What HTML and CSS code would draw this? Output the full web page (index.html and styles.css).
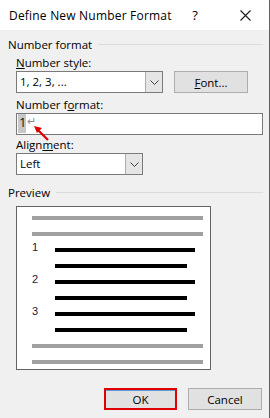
FILE: index.html
```html
<!DOCTYPE html>
<html lang="en">
<head>
    <meta charset="UTF-8">
    <meta name="viewport" content="width=device-width, initial-scale=1.0">
    <link rel="stylesheet" href="styles.css">
    <title>Define New Number Format</title>
</head>
<body>
    <div class="dialog">
        <div class="titlebar">
            <span class="title">Define New Number Format</span>
            <span class="help">?</span>
            <svg class="close" width="11" height="11" viewBox="0 0 11 11">
                <path d="M0.5 0.5 L10.5 10.5 M10.5 0.5 L0.5 10.5" stroke="#1a1a1a" stroke-width="1.1" fill="none"/>
            </svg>
        </div>

        <div class="content">
            <div class="group-label"><span>Number format</span><div class="rule"></div></div>

            <div class="field-label label-style"><u>N</u>umber style:</div>
            <div class="row">
                <div class="combo combo-style">
                    <span class="combo-text">1, 2, 3, ...</span>
                    <span class="combo-btn"><svg width="9" height="5" viewBox="0 0 9 5"><path d="M0.5 0.5 L4.5 4.5 L8.5 0.5" stroke="#404040" fill="none"/></svg></span>
                </div>
                <button class="btn btn-font"><u>F</u>ont...</button>
            </div>

            <div class="field-label label-format">Number f<u>o</u>rmat:</div>
            <div class="textbox">
                <span class="sel">1</span><span class="para">&#8629;</span>
                <svg class="arrow" width="20" height="22" viewBox="0 0 20 22">
                    <path d="M16 19 L6 9" stroke="#e00000" stroke-width="2.2" fill="none"/>
                    <path d="M2 5 L10 7 L5 12 Z" fill="#e00000"/>
                </svg>
            </div>

            <div class="field-label label-align">Align<u>m</u>ent:</div>
            <div class="combo combo-align">
                <span class="combo-text">Left</span>
                <span class="combo-btn"><svg width="9" height="5" viewBox="0 0 9 5"><path d="M0.5 0.5 L4.5 4.5 L8.5 0.5" stroke="#404040" fill="none"/></svg></span>
            </div>

            <div class="group-label label-preview"><span>Preview</span><div class="rule"></div></div>

            <div class="preview">
                <div class="pline gray"></div>
                <div class="pline gray"></div>
                <div class="pline item"><span class="num">1</span><div class="bar long"></div></div>
                <div class="pline item"><span class="num"></span><div class="bar short"></div></div>
                <div class="pline item"><span class="num">2</span><div class="bar long"></div></div>
                <div class="pline item"><span class="num"></span><div class="bar short"></div></div>
                <div class="pline item"><span class="num">3</span><div class="bar long"></div></div>
                <div class="pline item"><span class="num"></span><div class="bar short"></div></div>
                <div class="pline gray"></div>
                <div class="pline gray"></div>
            </div>

            <div class="buttons">
                <button class="btn btn-ok">OK</button>
                <button class="btn btn-cancel">Cancel</button>
            </div>
        </div>
    </div>
</body>
</html>
```

FILE: styles.css
```css
* {
  box-sizing: border-box;
  margin: 0;
  padding: 0;
}

body {
  font-family: "Open Sans", "Noto Sans", sans-serif;
  font-size: 11.5px;
  color: #000;
  background: #f0f0f0;
  width: 270px;
  height: 418px;
  overflow: hidden;
}

.dialog {
  width: 270px;
  height: 418px;
  background: #f0f0f0;
  border-right: 1px #5f5f5f solid;
}

.titlebar {
  height: 30px;
  background: #fff;
  display: flex;
  align-items: center;
  padding-left: 9px;
  font-size: 12px;
}

.title {
  flex: 1;
  letter-spacing: 0.2px;
}

.help {
  width: 14px;
  text-align: center;
  margin-right: 38px;
  font-size: 13px;
}

.close {
  margin-right: 18px;
}

.content {
  padding: 6px 7px 0 8px;
  position: relative;
}

.group-label {
  display: flex;
  align-items: center;
  height: 16px;
  color: #000;
}

.group-label .rule {
  flex: 1;
  height: 1px;
  background: #dcdcdc;
  margin-left: 6px;
  margin-right: -1px;
}

.field-label {
  height: 16px;
  line-height: 16px;
  margin-left: 8px;
}

.label-style {
  margin-top: 3px;
}

.row {
  display: flex;
  margin-left: 8px;
}

.combo {
  height: 22px;
  background: #fff;
  border: 1px #7a7a7a solid;
  display: flex;
}

.combo-text {
  flex: 1;
  line-height: 20px;
  padding-left: 3px;
}

.combo-btn {
  width: 17px;
  background: #e5e5e5;
  border-left: 1px #adadad solid;
  display: flex;
  align-items: center;
  justify-content: center;
}

.combo-style {
  width: 147px;
}

.combo-align {
  width: 127px;
  height: 22px;
  margin-left: 8px;
}

.btn {
  font-family: inherit;
  font-size: 11.5px;
  background: #e1e1e1;
  border: 1px #adadad solid;
  height: 22px;
  width: 74px;
  color: #000;
}

.btn-font {
  margin-left: 11px;
}

.label-format {
  margin-top: 4px;
}

.textbox {
  position: relative;
  margin-left: 8px;
  width: 247px;
  height: 22px;
  background: #fff;
  border: 1px #7a7a7a solid;
  display: flex;
  align-items: flex-start;
  padding-left: 1px;
}

.sel {
  display: block;
  width: 8px;
  height: 19px;
  background: #c8c8c8;
  font-size: 13px;
  line-height: 17px;
  padding-left: 1px;
  color: #111;
}

.para {
  color: #8a8a8a;
  font-size: 11px;
  line-height: 14px;
  margin-left: 1px;
}

.arrow {
  position: absolute;
  left: 15px;
  top: 7px;
}

.label-align {
  margin-top: 2px;
}

.label-preview {
  margin-top: 9px;
}

.preview {
  margin: 6px 0 0 8px;
  width: 195px;
  height: 164px;
  background: #fff;
  border: 1px #646464 solid;
  padding: 9px 7px 0 15px;
}

.pline {
  height: 16px;
  display: flex;
  align-items: flex-end;
}

.pline.gray {
  height: 4px;
  background: #a0a0a0;
  margin-top: 12px;
}

.pline.gray:first-child {
  margin-top: 0;
}

.item {
  align-items: flex-end;
}

.num {
  width: 23px;
  font-family: "Liberation Sans", Arial, sans-serif;
  font-size: 11px;
  line-height: 10px;
  color: #1a1a40;
}

.bar {
  height: 4px;
  background: #000;
}

.bar.long {
  width: 140px;
}

.bar.short {
  width: 132px;
}

.buttons {
  display: flex;
  justify-content: flex-end;
  gap: 11px;
  margin-top: 18px;
}

.btn-ok {
  width: 73px;
  border: 2px #e00000 solid;
  box-shadow: inset 0 1px 0 #5b9bd5;
}

.btn-cancel {
  width: 74px;
}
```
